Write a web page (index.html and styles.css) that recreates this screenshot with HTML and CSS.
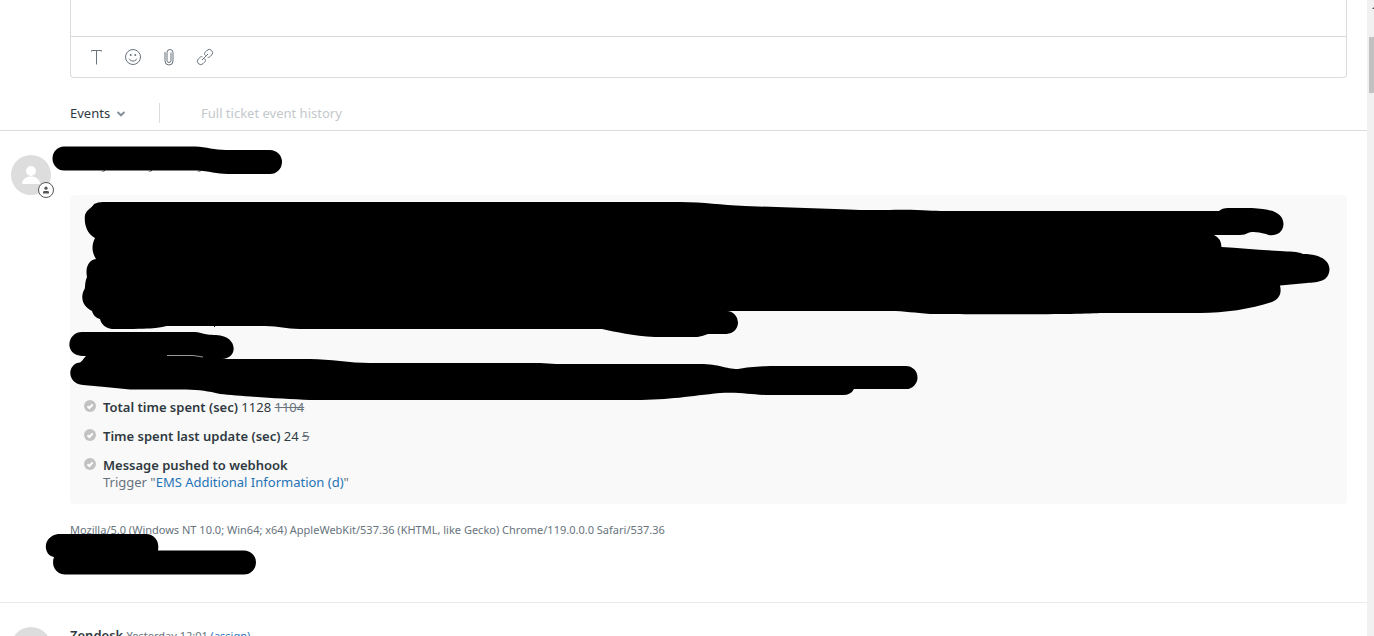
FILE: index.html
```html
<!DOCTYPE html>
<html lang="en">
<head>
  <meta charset="UTF-8">
  <meta name="viewport" content="width=device-width, initial-scale=1.0">
  <title>Ticket events</title>
  <link rel="stylesheet" href="styles.css">
</head>
<body>
  <main class="ticket">
    <form class="composer">
      <textarea class="composer-text" aria-label="Reply"></textarea>
      <div class="toolbar">
        <button type="button" class="tool" aria-label="Text formatting">
          <svg width="18" height="18" viewBox="0 0 18 18"><path d="M3.500 3.500v-1h10v1M8.500 2.500v14"/></svg>
        </button>
        <button type="button" class="tool" aria-label="Emoji">
          <svg width="18" height="18" viewBox="0 0 18 18"><circle cx="9" cy="9" r="7.500"/><path d="M5.200 10.700c1.500 3.200 6.100 3.200 7.600 0"/><circle class="dot" cx="6.700" cy="7" r="1"/><circle class="dot" cx="11.300" cy="7" r="1"/></svg>
        </button>
        <button type="button" class="tool" aria-label="Attach file">
          <svg width="18" height="18" viewBox="0 0 18 18"><path d="M5 4v9a4 4 0 0 0 8 0V4.500a3 3 0 0 0-6 0v8a2 2 0 0 0 4 0V4.500"/></svg>
        </button>
        <button type="button" class="tool" aria-label="Insert link">
          <svg width="18" height="18" viewBox="0 0 18 18"><path d="M6 12l6-6M9.500 7.500C8 6 8.500 4.800 9.500 3.800l1.400-1.400a3.200 3.200 0 0 1 4.700 4.700l-1.400 1.400c-.8.800-1.700 1-2.600.8M8.500 10.500c1.500 1.500 1 2.700 0 3.700l-1.400 1.400a3.200 3.200 0 0 1-4.700-4.700l1.400-1.400c.8-.8 1.700-1 2.600-.8"/></svg>
        </button>
      </div>
    </form>

    <nav class="filters">
      <label class="filter">
        <select class="filter-select" aria-label="Show">
          <option>Events</option>
        </select>
        <svg class="chevron" width="10" height="8" viewBox="0 0 10 8"><path d="M1.500 3L5 6.300 8.500 3"/></svg>
      </label>
      <a class="history" href="#history">Full ticket event history</a>
    </nav>

    <article class="event">
      <div class="avatar">
        <svg width="40" height="40" viewBox="0 0 40 40"><circle cx="20" cy="16" r="5"/><path d="M11 29c0-10 18-10 18 0z"/></svg>
        <span class="badge">
          <svg width="10" height="10" viewBox="0 0 10 10"><circle cx="5" cy="3.200" r="1.600"/><path d="M2 8.500V7.200Q2 6 3.500 6h3Q8 6 8 7.200v1.300z"/></svg>
        </span>
      </div>
      <div class="event-body">
        <header class="event-head"></header>
        <section class="panel">
          <div class="comment"></div>
          <ul class="changes">
            <li class="change">
              <svg class="check" width="12" height="12" viewBox="0 0 12 12"><circle cx="6" cy="6" r="6"/><path d="M3.500 6.200l1.900 1.800 3.300-3.700"/></svg>
              <p><strong>Total time spent (sec)</strong> 1128 <del>1104</del></p>
            </li>
            <li class="change">
              <svg class="check" width="12" height="12" viewBox="0 0 12 12"><circle cx="6" cy="6" r="6"/><path d="M3.500 6.200l1.900 1.800 3.300-3.700"/></svg>
              <p><strong>Time spent last update (sec)</strong> 24 <del>5</del></p>
            </li>
            <li class="change">
              <svg class="check" width="12" height="12" viewBox="0 0 12 12"><circle cx="6" cy="6" r="6"/><path d="M3.500 6.200l1.900 1.800 3.300-3.700"/></svg>
              <div>
                <p><strong>Message pushed to webhook</strong></p>
                <p class="trigger">Trigger "<a href="#trigger">EMS Additional Information (d)</a>"</p>
              </div>
            </li>
          </ul>
        </section>
        <p class="client">Mozilla/5.0 (Windows NT 10.0; Win64; x64) AppleWebKit/537.36 (KHTML, like Gecko) Chrome/119.0.0.0 Safari/537.36</p>
      </div>

      <!-- marker strokes over private details -->
      <svg class="redaction" width="1367" height="471" viewBox="0 131 1367 471" aria-hidden="true">
        <path d="M64 146.500H195C207 147 214 150 226 150H270A12 12 0 0 1 270 174H228C216 174 210 171 196 170.500H64A11.500 12 0 0 1 64 146.500z"/>
        <path d="M101 172l4-2v1zM148 172l4-2v1zM197 172l4-2v1z"/>
        <path d="M103 202H680C705 202 720 205 745 206L835 209C855 210 865 210 885 210C920 209 930 211 945 211H1219Q1222 208 1228 208H1252C1268 209 1283 211 1283.500 224C1283 235 1272 237 1266 234C1258 232 1252 231 1248 233Q1245 235 1240 235H1214Q1221 238 1221.500 247C1240 248 1260 250 1280 251C1290 252 1297 251 1303 254C1316 254 1329 258 1329.500 269C1329 282 1318 282 1307 283L1280 285.500C1282 294 1279 299 1272 302C1250 309 1225 313 1200 313H1100C1070 315 960 314 930 314C915 313 905 311 890 311H727A11.500 11.500 0 0 1 726 334H708C704 335 701 337 695 337H655C632 336 617 332 602 329H300C285 329 280 326 265 326H167C157 328 158 329 112 329C105 328 101 324 100 319C96 318 93 315 92 311C83 307 80 298 84 290C86 288 84 284 87 277C85 267 89 260 96 259C91 251 92 244 95 238C86 233 84 223 85 215C87 209 92 208 94 204Q98 202 103 202zM214 325h1v2h-1z"/>
        <path d="M82 332H194C202 332 202 335 216 335C239 336 238 359 222 359H310C330 359 350 363 370 363H540L556 364H700C720 364 725 369 738 369C750 367 758 366 780 366H906A11.500 11.500 0 0 1 906 389H854Q851 395 843 395H770C750 395 744 392 720 393C690 396 670 400 635 400H310C280 399 240 396 220 394C208 391 200 390 186 389.500H130L105 387L83 385C69 384 66 368 77 363C82 363 82 360 86 356C63 358 66 332 82 332z"/>
        <path class="gap" d="M167 355.500h26l10 1.500"/>
        <path d="M58 534H146C154 534 160 541 158 550.500H244A12 12 0 0 1 244 574.500H65C55 574 51 565 54 557C44 556 41 537 58 534z"/>
      </svg>
    </article>

    <article class="event event-next">
      <div class="avatar"></div>
      <div class="event-body">
        <p class="byline"><strong>Zendesk</strong> <small>Yesterday 12:01 <a href="#assign">(assign)</a></small></p>
      </div>
    </article>
  </main>

  <div class="scrollbar">
    <svg class="scroll-up" width="4" height="5" viewBox="0 0 4 5"><path d="M0 4l4-4v4z"/></svg>
    <div class="thumb"></div>
  </div>
</body>
</html>
```
FILE: styles.css
```css
* {
  box-sizing: border-box;
}
body {
  display: flex;
  height: 100vh;
  margin: 0;
  overflow: hidden;
  background-color: #fff;
  color: #2f3941;
  font-family: "Segoe UI", "Noto Sans", sans-serif;
  font-size: 13px;
  line-height: 17px;
}
p {
  margin: 0;
}
strong {
  font-weight: 600;
}
a {
  color: #1f73b7;
  text-decoration: none;
}
.ticket {
  flex: 1;
  min-width: 0;
}

/* Reply box */
.composer {
  margin: 0 20px 0 70px;
  border: 1px solid #d8dcde;
  border-top: none;
  border-radius: 0 0 4px 4px;
}
.composer-text {
  display: block;
  width: 100%;
  height: 36px;
  border: none;
  outline: none;
  resize: none;
  background: transparent;
  font: inherit;
}
.toolbar {
  display: flex;
  height: 41px;
  padding-left: 8px;
  border-top: 1px solid #d8dcde;
}
.tool {
  display: flex;
  align-items: center;
  justify-content: center;
  width: 36px;
  padding: 0;
  border: none;
  background: none;
  cursor: pointer;
}
.tool svg {
  fill: none;
  stroke: #68737d;
}
.tool .dot {
  fill: #68737d;
  stroke: none;
}

/* Filter row */
.filters {
  display: flex;
  align-items: center;
  height: 53px;
  padding: 18px 20px 0 70px;
  border-bottom: 1px solid #d8dcde;
}
.filter {
  display: flex;
  align-items: center;
  gap: 5px;
  width: 90px;
  height: 20px;
  margin-right: 41px;
  border-right: 1px solid #d8dcde;
}
.filter-select {
  appearance: none;
  padding: 0;
  border: none;
  background: none;
  color: #2f3941;
  font: inherit;
}
.chevron {
  fill: none;
  stroke: #87929d;
  stroke-width: 2;
}
.history {
  color: #c2c8cc;
}

/* Events */
.event {
  position: relative;
  display: flex;
  gap: 19px;
  padding: 24px 20px 64px 11px;
  border-bottom: 1px solid #e9ebed;
}
.avatar {
  position: relative;
  flex: none;
  width: 40px;
  height: 40px;
  border-radius: 50%;
  background-color: #ddd;
}
.avatar svg {
  fill: #fff;
}
.badge {
  position: absolute;
  right: -3px;
  bottom: -3px;
  display: flex;
  align-items: center;
  justify-content: center;
  width: 16px;
  height: 16px;
  border: 1px solid #555;
  border-radius: 50%;
  background-color: #fff;
}
.badge svg {
  fill: #555;
}
.event-body {
  flex: 1;
  min-width: 0;
}
.event-head {
  height: 40px;
}
.panel {
  padding: 0 14px 13px;
  border-radius: 4px;
  background-color: #f9f9f9;
}
.comment {
  height: 204px;
}
.changes {
  display: flex;
  flex-direction: column;
  gap: 12px;
  margin: 0;
  padding: 0;
  list-style: none;
}
.change {
  display: flex;
  gap: 7px;
}
.check {
  flex: none;
  margin-top: 1px;
  fill: #c2c2c2;
}
.check path {
  fill: none;
  stroke: #fff;
  stroke-width: 2;
}
del,
.trigger {
  color: #68737d;
}
.client {
  margin-top: 17px;
  color: #68737d;
  font-size: 11px;
}
.redaction {
  position: absolute;
  top: 0;
  left: 0;
  pointer-events: none;
}
.gap {
  fill: none;
  stroke: #999;
}
.event-next {
  border-bottom: none;
}
.event-next .byline {
  color: #68737d;
}
.byline strong {
  color: #2f3941;
}
.byline small {
  font-size: 11px;
}

/* Scroll track */
.scrollbar {
  flex: none;
  width: 7px;
  padding: 5px 0 0 2px;
  background-color: #f1f1f1;
}
.scroll-up {
  display: block;
  margin-left: 3px;
  fill: #505050;
}
.thumb {
  height: 56px;
  margin-top: 27px;
  background-color: #c1c1c1;
}
```
